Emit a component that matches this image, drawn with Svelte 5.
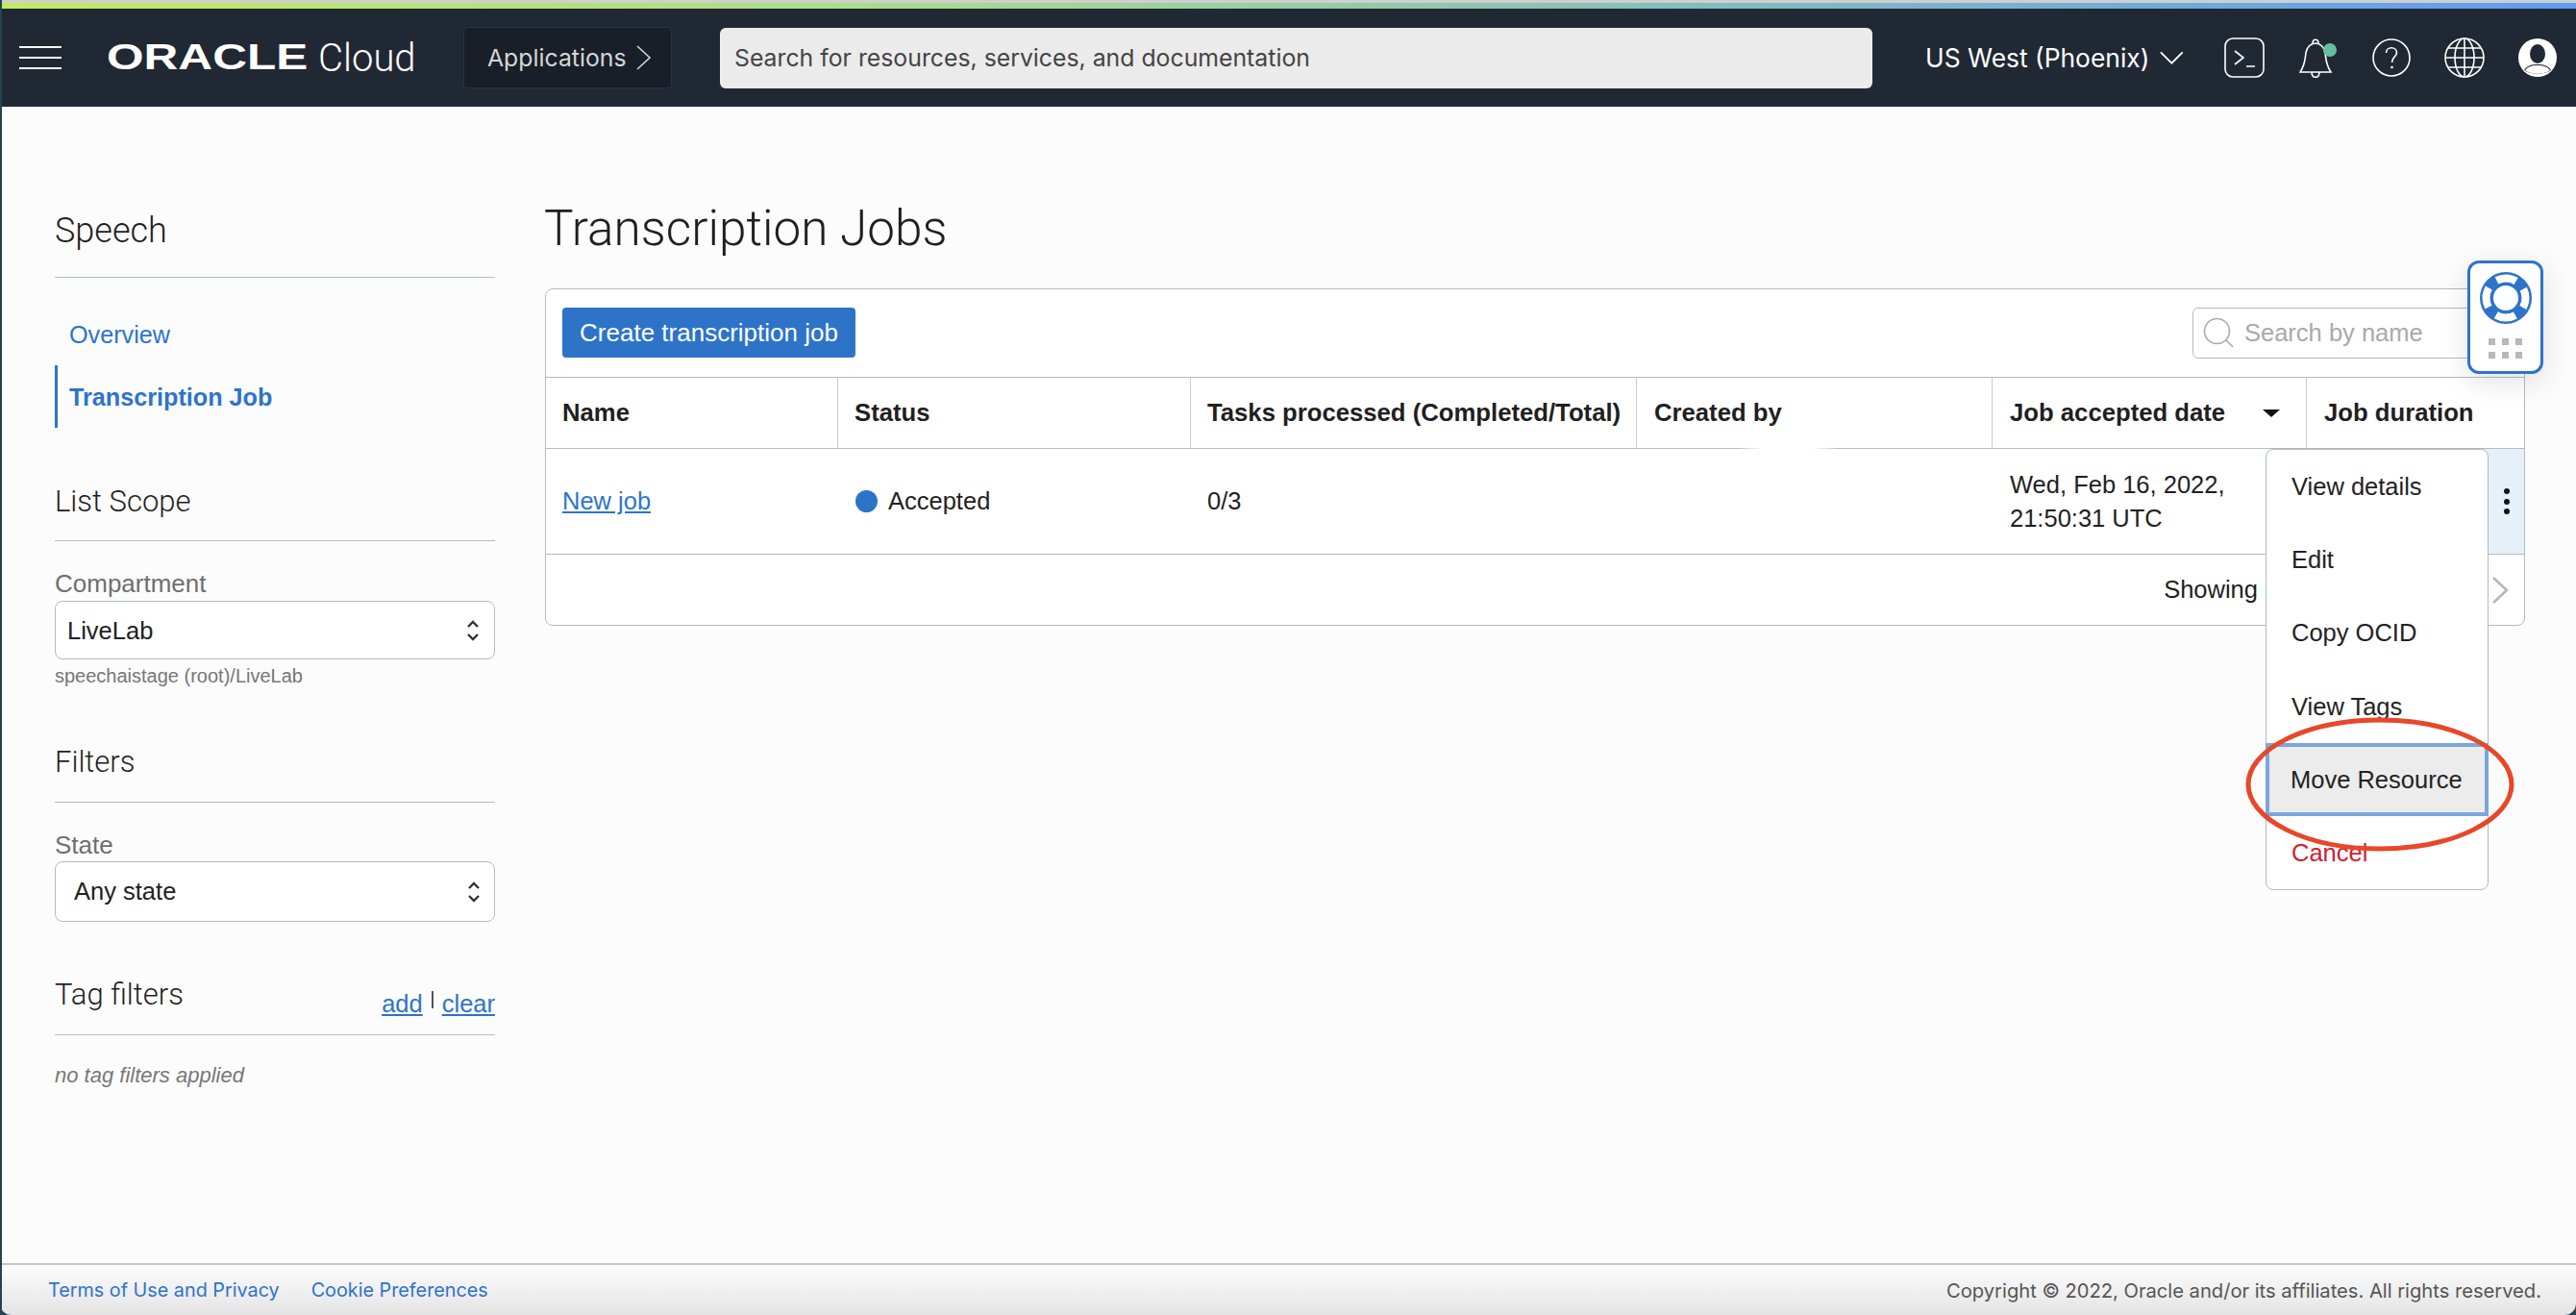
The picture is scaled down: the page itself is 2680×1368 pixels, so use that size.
<script>
  const columns = [
    { label: "Name", width: 304 },
    { label: "Status", width: 367 },
    { label: "Tasks processed (Completed/Total)", width: 464 },
    { label: "Created by", width: 370 },
    { label: "Job accepted date", width: 327, sorted: true },
    { label: "Job duration", width: 226 }
  ];
  const menu = ["View details", "Edit", "Copy OCID", "View Tags", "Move Resource", "Cancel"];
</script>

<div class="page">
  <div class="topline"></div>
  <div class="gradient"></div>
  <header class="nav">
    <div class="burger"><span></span><span></span><span></span></div>
    <div class="brand">
      <span class="oracle">ORACLE</span>
      <span class="cloud">Cloud</span>
    </div>
    <button class="apps">Applications
      <svg width="16" height="26" viewBox="0 0 16 26" fill="none" stroke="#d6d6d6" stroke-width="1.6"><path d="M1 1l13 12L1 25" /></svg>
    </button>
    <div class="search">Search for resources, services, and documentation</div>
    <div class="region">US West (Phoenix)
      <svg width="26" height="14" viewBox="0 0 26 14" fill="none" stroke="#fff" stroke-width="2"><path d="M1 1l12 12L25 1" /></svg>
    </div>
    <svg class="ico term" width="42" height="42" viewBox="0 0 42 42" fill="none" stroke="#fff" stroke-width="1.6"><rect x="1" y="1" width="40" height="40" rx="8" /><path d="M11 14l9 7-9 7M23 30h9" /></svg>
    <svg class="ico bell" width="40" height="42" viewBox="0 0 40 42" fill="none" stroke="#fff" stroke-width="1.6"><path d="M1 36c5-7 5-13 6-20 1-6 5-10 10-10s9 4 10 10c1 7 1 13 6 20zM14 6c0-5 6-5 6 0M13 36c0 7 8 7 8 0" /><ellipse cx="32" cy="13" rx="7" ry="7" fill="#66bfa0" stroke="none" /></svg>
    <svg class="ico help" width="40" height="40" viewBox="0 0 40 40" fill="none" stroke="#fff" stroke-width="1.6"><circle cx="20" cy="20" r="19" /><path d="M14.500 15c0-7 11-7 11 0 0 4-5 4-5 10" /><circle cx="20.500" cy="30" r="1.300" fill="#fff" stroke="none" /></svg>
    <svg class="ico globe" width="42" height="42" viewBox="0 0 42 42" fill="none" stroke="#fff" stroke-width="1.6"><circle cx="21" cy="21" r="20" /><ellipse cx="21" cy="21" rx="10" ry="20" /><path d="M21 1v40M1 21h40M4 11h34M4 31h34" /></svg>
    <svg class="ico last" width="40" height="40" viewBox="0 0 40 40"><circle cx="20" cy="20" r="20" fill="#fff" /><ellipse cx="20" cy="16" rx="8" ry="10" fill="#202833" /><path d="M6 33c3-5 8-6 14-6s11 1 14 6c-7 5-21 5-28 0z" fill="#202833" /><path d="M7 33c3-4 8-5 13-5s10 1 13 5c-6 5-20 5-26 0z" fill="#fff" /></svg>
  </header>

  <div class="body">
    <aside class="side">
      <h2 class="speech">Speech</h2>
      <nav class="links">
        <a class="link">Overview</a>
        <a class="link active">Transcription Job</a>
      </nav>

      <h3 class="scope">List Scope</h3>
      <label class="lbl">Compartment</label>
      <div class="select lab">LiveLab
        <svg width="14" height="24" viewBox="0 0 14 24" fill="none" stroke="#333" stroke-width="2.4"><path d="M2 8l5-5 5 5M2 16l5 5 5-5" /></svg>
      </div>
      <div class="hint">speechaistage (root)/LiveLab</div>

      <h3 class="filters">Filters</h3>
      <label class="lbl">State</label>
      <div class="select any">Any state
        <svg width="14" height="24" viewBox="0 0 14 24" fill="none" stroke="#333" stroke-width="2.4"><path d="M2 8l5-5 5 5M2 16l5 5 5-5" /></svg>
      </div>

      <div class="tagrow">
        <h3>Tag filters</h3>
        <span class="tagact"><a>add</a><i></i><a>clear</a></span>
      </div>
      <div class="notags">no tag filters applied</div>
    </aside>

    <main class="main">
      <h1>Transcription Jobs</h1>
      <section class="panel">
        <div class="toolbar">
          <button class="create">Create transcription job</button>
          <div class="find">
            <svg width="32" height="32" viewBox="0 0 32 32" fill="none" stroke="#aaa" stroke-width="1.6"><circle cx="14.500" cy="14.500" r="13" /><path d="M24 24l7 7" /></svg>
            <span>Search by name</span>
          </div>
        </div>
        <div class="thead">
          {#each columns as c}
            <div class="th" style="width:{c.width}px">{c.label}
              {#if c.sorted}<svg width="18" height="8" viewBox="0 0 18 8"><path d="M0 0h18L9 8z" fill="#111" /></svg>{/if}
            </div>
          {/each}
        </div>
        <div class="row">
          <div class="td" style="width:304px"><a class="joblink">New job</a></div>
          <div class="td" style="width:367px"><span class="dot"></span>Accepted</div>
          <div class="td" style="width:464px">0/3</div>
          <div class="td" style="width:370px"></div>
          <div class="td date" style="width:327px">Wed, Feb 16, 2022,<br />21:50:31 UTC</div>
          <div class="td kebabcell"><span class="kebab"><b></b><b></b><b></b></span></div>
        </div>
        <div class="pager">
          <span>Showing</span>
          <svg width="18" height="30" viewBox="0 0 18 30" fill="none" stroke="#b5b5b5" stroke-width="2.500"><path d="M2 2l14 13L2 28" /></svg>
        </div>
      </section>
    </main>
  </div>

  <footer class="foot">
    <div class="footlinks"><a>Terms of Use and Privacy</a><a>Cookie Preferences</a></div>
    <div class="copy">Copyright © 2022, Oracle and/or its affiliates. All rights reserved.</div>
  </footer>

  <!-- things floating over the table -->
  <div class="smudge"></div>
  <div class="menu">
    {#each menu as m}
      <div class="item" class:focus={m === "Move Resource"} class:cancel={m === "Cancel"}>{m}</div>
    {/each}
  </div>
  <div class="helper">
    <svg width="54" height="54" viewBox="0 0 54 54">
      <circle cx="27" cy="27" r="20" fill="none" stroke="#2d74c9" stroke-width="14" />
      <circle cx="27" cy="27" r="20.500" fill="none" stroke="#fff" stroke-width="8" stroke-dasharray="21 11.200" stroke-dashoffset="10.500" />
    </svg>
    <div class="grip">{#each Array(6) as _}<span></span>{/each}</div>
  </div>
  <svg class="ring" width="290" height="150" viewBox="0 0 290 150" fill="none"><ellipse cx="145" cy="75" rx="137" ry="67" stroke="#e8472a" stroke-width="5" /></svg>
</div>

<style>
  :global(body) { margin: 0; background: #fcfcfc; }
  .page { position: relative; width: 2680px; height: 1368px; overflow: hidden; background: #27434f; font-family: "Liberation Sans", Arial, sans-serif; color: #1f1f1f; border-left: 2px solid #27434f; box-sizing: border-box; }
  .topline { height: 3px; background: #cfcfcf; margin-left: -2px; }
  .gradient { height: 6px; margin-left: -2px; background: linear-gradient(90deg, #c3ea62 0%, #a9dc8c 35%, #7fb9c4 70%, #5e9cf5 100%); }
  .nav { height: 102px; margin-left: -2px; background: #202833; display: flex; align-items: center; color: #fff; font-family: Inter, sans-serif; }
  .nav > * { flex: none; }
  .burger { margin-left: 20px; width: 44px; display: flex; flex-direction: column; gap: 9px; }
  .burger span { height: 2px; background: #fff; }
  .brand { margin-left: 47px; width: 371px; display: flex; align-items: center; }
  .oracle { font-family: "Liberation Sans", sans-serif; font-weight: 700; font-size: 37px; transform: scaleX(1.34); transform-origin: left; width: 220px; flex: none; }
  .cloud { font-family: Roboto, sans-serif; font-weight: 300; font-size: 40px; }
  .apps { width: 217px; height: 64px; margin-right: 50px; background: #181f28; border: 1px solid #2c343f; border-radius: 4px; color: #d6d6d6; font: 400 24.800px Inter, sans-serif; display: flex; align-items: center; gap: 10px; padding: 0 0 0 24px; box-sizing: border-box; }
  .search { width: 1199px; height: 63px; background: #ebebeb; border-radius: 6px; color: #444; font-size: 24.800px; line-height: 63px; padding-left: 15px; box-sizing: border-box; }
  .region { margin-left: 55px; font-size: 26.400px; display: flex; align-items: center; gap: 11px; width: 269px; white-space: nowrap; }
  .term { margin-left: 42px; margin-right: 36px; }
  .bell, .help { margin-right: 36px; }
  .globe { margin-left: -1px; margin-right: 35px; }

  .body { display: flex; height: 1204px; background: #fcfcfc; }
  .side { width: 458px; margin-left: 55px; flex: none; }
  h1, h2, h3 { margin: 0; font-weight: 300; font-family: Roboto, sans-serif; }
  .speech { font-size: 36px; line-height: 40px; margin-top: 109px; padding-bottom: 28px; border-bottom: 1px solid #b5bcc7; }
  .links { display: flex; flex-direction: column; padding-top: 27px; }
  .link { color: #2d74c9; font-size: 25.200px; line-height: 66px; padding-left: 15px; height: 65px; }
  .link:first-child { height: 64px; line-height: 64px; }
  .link.active { font-weight: 700; border-left: 3px solid #2d74c9; padding-left: 12px; }
  .scope, .filters { font-size: 31px; line-height: 36px; border-bottom: 1px solid #b5bcc7; }
  .scope { margin-top: 59px; padding-bottom: 22px; }
  .lbl { display: block; color: #6f6f6f; font-size: 26px; line-height: 28px; margin-top: 30px; }
  .select { height: 61px; margin-top: 4px; border: 1px solid #b5b9c2; border-radius: 8px; background: #fff; box-sizing: border-box; display: flex; align-items: center; justify-content: space-between; font-size: 25.500px; color: #222; }
  .lab { padding: 2px 15px 0 12px; }
  .lab svg { margin-top: -2px; }
  .any { height: 63px; margin-top: 3px; padding: 0 14px 0 19px; }
  .hint { color: #777; font-size: 20px; line-height: 24px; margin-top: 5px; }
  .filters { margin-top: 60px; padding-bottom: 23px; }
  .tagrow { display: flex; justify-content: space-between; align-items: flex-end; margin-top: 58px; padding-bottom: 19px; border-bottom: 1px solid #b5bcc7; }
  .tagrow h3 { font-size: 31px; line-height: 36px; margin-bottom: 4px; }
  .tagact { display: flex; align-items: center; gap: 9px; font-size: 25.500px; line-height: 26px; }
  .tagact a { color: #2d74c9; text-decoration: underline; }
  .tagact i { width: 2px; height: 18px; margin-bottom: 8px; background: #555; }
  .notags { color: #777; font-size: 22px; font-style: italic; margin-top: 29px; }

  .main { flex: 1; margin-left: 52px; margin-right: 53px; }
  h1 { font-size: 51.300px; line-height: 60px; margin-top: 97px; margin-bottom: 32px; margin-left: -1px; }
  .panel { border: 1px solid #b5b9c2; border-radius: 8px; background: #fff; height: 351px; box-sizing: border-box; display: flex; flex-direction: column; }
  .toolbar { height: 92px; display: flex; align-items: center; justify-content: space-between; padding: 0 18px 1px 17px; border-bottom: 1px solid #b5b9c2; box-sizing: border-box; flex: none; }
  .create { height: 52px; width: 305px; background: #2d74c9; color: #fff; border: 0; border-radius: 4px; font: 400 26px "Liberation Sans", sans-serif; padding: 0; }
  .find { width: 329px; height: 53px; border: 1px solid #b5b9c2; border-radius: 6px; display: flex; align-items: center; gap: 11px; padding-left: 10px; box-sizing: border-box; color: #a9a9a9; font-size: 25.500px; margin-right: -2px; }
  .thead { height: 74px; display: flex; border-bottom: 1px solid #b5b9c2; flex: none; box-sizing: border-box; }
  .th { display: flex; align-items: center; justify-content: space-between; padding: 0 17px; font-weight: 700; font-size: 25.700px; box-sizing: border-box; border-right: 1px solid #c8ccd2; white-space: nowrap; flex: none; }
  .th:nth-child(n+4) { padding-left: 18px; }
  .th:last-child { border-right: 0; }
  .th svg { margin-right: 10px; }
  .row { height: 110px; display: flex; border-bottom: 1px solid #b5b9c2; box-sizing: border-box; flex: none; }
  .td { display: flex; align-items: center; padding-left: 17px; box-sizing: border-box; font-size: 25.500px; flex: none; }
  .date { line-height: 35px; display: block; padding-top: 20px; padding-left: 18px; }
  .joblink { color: #2d74c9; text-decoration: underline; }
  .dot { width: 23px; height: 23px; border-radius: 50%; background: #2d74c9; margin-left: 1px; margin-right: 11px; }
  .kebabcell { flex: 1; justify-content: flex-end; background: linear-gradient(90deg, #fff 180px, #e6f0f9 180px); }
  .kebab { display: flex; flex-direction: column; gap: 4.500px; margin-right: 15px; }
  .kebab b { width: 6px; height: 6px; border-radius: 50%; background: #111; }
  .pager { flex: 1; display: flex; align-items: center; justify-content: flex-end; gap: 243px; padding-right: 16px; font-size: 25.500px; }

  .foot { position: absolute; left: -2px; right: 0; bottom: 0; height: 54px; border-top: 2px solid #c4c4c4; background: linear-gradient(180deg, #fcfcfc, #e4e4e4); display: flex; align-items: center; justify-content: space-between; padding: 0 36px 0 50px; box-sizing: border-box; font-family: Inter, sans-serif; font-size: 19.800px; border-radius: 0 0 12px 12px; }
  .footlinks { display: flex; gap: 33px; color: #2d74c9; }
  .copy { color: #555; font-size: 20.150px; }

  .smudge { position: absolute; left: 1805px; top: 465px; width: 106px; height: 3px; background: linear-gradient(90deg, transparent, #fff 25%, #fff 75%, transparent); }
  .menu { position: absolute; left: 2355px; top: 467px; width: 232px; height: 459px; background: #fff; border: 1.5px solid #b5b9c2; border-radius: 8px; box-sizing: border-box; }
  .item { height: 76.200px; line-height: 76px; padding-left: 26px; font-size: 25.500px; box-sizing: border-box; color: #222; }
  .item.focus { background: #ececec; border: 4px solid #7ba7dc; line-height: 68px; padding-left: 22px; margin: 0 -1px; }
  .item.cancel { color: #cc2233; }
  .helper { position: absolute; left: 2565px; top: 271px; width: 79px; height: 118px; background: #fff; border: 3px solid #2d74c9; border-radius: 12px; box-sizing: border-box; box-shadow: 0 8px 30px rgba(0, 0, 0, 0.12); display: flex; flex-direction: column; align-items: center; padding-top: 9px; }
  .grip { display: grid; grid-template-columns: repeat(3, 7px); gap: 7px; margin-top: 15px; }
  .grip span { height: 7px; background: #b5b8c0; }
  .ring { position: absolute; left: 2329px; top: 741px; }
</style>
